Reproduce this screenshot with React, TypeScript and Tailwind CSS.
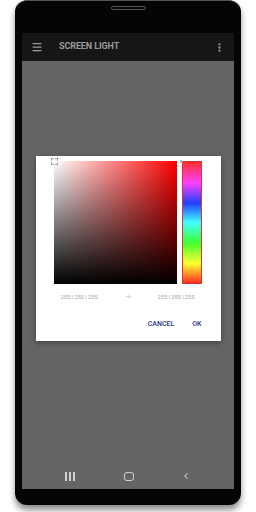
import { Menu, MoreVertical, ArrowRight, ChevronLeft } from "lucide-react";

const font = { fontFamily: "Roboto, 'Liberation Sans', sans-serif" };

function ColorPicker() {
  return (
    <div className="flex gap-[5px] pl-[18px] pt-[5px]">
      <div className="relative h-[123px] w-[123px] bg-[#ff0000]">
        <div className="absolute inset-0 bg-gradient-to-r from-white to-transparent" />
        <div className="absolute inset-0 bg-gradient-to-b from-transparent to-black" />
        <div className="absolute -left-[3px] -top-[3px] h-[7px] w-[7px] border border-dashed border-[#999]" />
      </div>
      <div className="relative h-[123px] w-[20px] border border-[#d33] bg-[linear-gradient(to_bottom,#ff3030_0%,#ff40ff_17%,#2040ff_34%,#40ffff_50%,#40ff30_67%,#ffff30_84%,#ff3020_100%)]">
        <div className="absolute -left-[3px] -top-[2px] h-[3px] w-[3px] rounded-full bg-[#aaa]" />
      </div>
    </div>
  );
}

export default function App() {
  return (
    <div className="h-[512px] w-[256px] overflow-hidden bg-white" style={font}>
      <div className="ml-[15px] flex h-[505px] w-[226px] flex-col rounded-[12px] border-t border-[#555] bg-[#050505] px-[7px] shadow-[0_5px_6px_rgba(0,0,0,0.45)]">
        <div className="flex h-[32px] justify-center pt-[5px]">
          <div className="h-[4px] w-[35px] rounded-full border border-[#555]" />
        </div>
        <div className="flex h-[28px] items-center bg-[#161616] pl-[9px] pr-[9px]">
          <Menu className="h-[12px] w-[12px] text-[#9a9a9a]" strokeWidth={2.5} />
          <span className="ml-[16px] text-[9px] font-bold tracking-[-0.1px] text-[#9a9a9a]">SCREEN LIGHT</span>
          <MoreVertical className="ml-auto h-[11px] w-[11px] text-[#9a9a9a]" strokeWidth={3} />
        </div>
        <div className="flex h-[402px] justify-center bg-[#656565] pt-[95px]">
          <div className="h-[185px] w-[185px] bg-white shadow-[0_2px_6px_rgba(0,0,0,0.35)]">
            <ColorPicker />
            <div className="mt-[9px] flex h-[7px] items-center whitespace-nowrap text-[6px] leading-none tracking-[-0.15px] text-[#a8a8a8]">
              <span className="ml-[25px] w-[38px]">255 | 255 | 255</span>
              <ArrowRight className="ml-[26px] h-[7px] w-[7px] text-[#cfcfcf]" strokeWidth={3} />
              <span className="ml-[26px]">255 | 255 | 255</span>
            </div>
            <div className="mt-[21px] flex h-[7px] items-center justify-end pr-[19px] text-[7px] leading-none font-medium text-[#283593]">
              <span>CANCEL</span>
              <span className="ml-[18px]">OK</span>
            </div>
          </div>
        </div>
        <div className="flex h-[26px] items-center bg-[#656565] text-[#d0d0d0]">
          <div className="ml-[43px] flex h-[9px] gap-[2.5px]">
            <div className="w-[1.5px] bg-[#d0d0d0]" />
            <div className="w-[1.5px] bg-[#d0d0d0]" />
            <div className="w-[1.5px] bg-[#d0d0d0]" />
          </div>
          <div className="ml-[49px] h-[9px] w-[10px] rounded-[3px] border-[1.5px] border-[#d0d0d0]" />
          <ChevronLeft className="ml-[47px] h-[10px] w-[10px]" strokeWidth={2.5} />
        </div>
      </div>
    </div>
  );
}
